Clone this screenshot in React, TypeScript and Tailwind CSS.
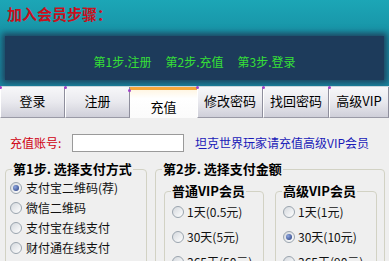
const Radio = ({ checked }: { checked?: boolean }) => (
  <span className="inline-flex h-[12px] w-[12px] shrink-0 items-center justify-center rounded-full border border-[#9aa4ae] bg-[linear-gradient(135deg,#d4d8dd,#ffffff)]">
    {checked && <span className="h-[6px] w-[6px] rounded-full bg-[radial-gradient(circle_at_35%_35%,#8ea6e0,#23397a)]" />}
  </span>
);

const tabs = [
  { label: "登录", w: "w-[65px]" },
  { label: "注册", w: "w-[65px]" },
  { label: "充值", w: "w-[67px]", active: true },
  { label: "修改密码", w: "w-[66px]" },
  { label: "找回密码", w: "w-[66px]" },
  { label: "高级VIP", w: "w-[60px]" },
];

const payWays = ["支付宝二维码(荐)", "微信二维码", "支付宝在线支付", "财付通在线支付"];
const normalVip = ["1天(0.5元)", "30天(5元)", "365天(50元)"];
const highVip = ["1天(1元)", "30天(10元)", "365天(90元)"];

export default function App() {
  return (
    <div className="h-[261px] w-[389px] overflow-hidden bg-[#efefef] font-['Noto_Sans_CJK_SC',sans-serif]">
      {/* header */}
      <div className="h-[86px] overflow-hidden bg-[linear-gradient(to_bottom,#1ca6b6,#1790a4_45%,#1a86a0)]">
        <div className="h-[36px] pl-[7px] pt-[4px] text-[15px] font-bold leading-[20px] text-[#c8101c]">加入会员步骤：</div>
        <div className="mx-[5px] flex h-[44px] items-center justify-center gap-[14px] bg-[#1d3b5b] pt-[8px] text-[12px] leading-[14px] text-[#36e036] shadow-[0_0_6px_3px_#1e4662]">
          <span>第1步.注册</span>
          <span>第2步.充值</span>
          <span>第3步.登录</span>
        </div>
      </div>
      <div className="h-[1px] bg-[#c9d6dc]" />

      {/* tabs */}
      <div className="flex h-[31px]">
        {tabs.map((t) => (
          <div
            key={t.label}
            className={
              t.active
                ? `${t.w} relative flex items-center justify-center border-t-[3px] border-[#f5a63a] bg-[linear-gradient(to_bottom,#fff6e4,#ffffff_30%,#fbfbfb)] pt-[5px] text-[13px] text-black`
                : `${t.w} relative flex items-center justify-center border-r border-l border-b border-r-[#8e8e9c] border-l-white border-b-[#9a9aa6] bg-[linear-gradient(to_bottom,#f7f7f9,#e9e9ee_50%,#cfcfd9)] pb-[2px] text-[13px] text-black`
            }
          >
            <span className="absolute -top-[1px] -left-[2px] h-[3px] w-[3px] rounded-full bg-[#a040c8]" />
            {t.label}
          </div>
        ))}
      </div>

      {/* account row */}
      <div className="mt-[16px] flex h-[18px] items-center pl-[10px] text-[12px]">
        <span className="w-[62px] text-[#d00010]">充值账号:</span>
        <input className="h-[18px] w-[112px] border border-[#9a9a9a] bg-white outline-none" />
        <span className="ml-[11px] text-[#1a1ab8]">坦克世界玩家请充值高级VIP会员</span>
      </div>

      {/* groups */}
      <div className="mt-[9px] flex gap-[8px] pl-[5px]">
        <fieldset className="h-[110px] w-[142px] rounded-[4px] border border-[#d2d2c4]">
          <legend className="ml-[6px] px-[1px] text-[13px] font-bold leading-[16px] text-black">第1步. 选择支付方式</legend>
          <div className="pt-[1px] pl-[4px]">
            {payWays.map((p, i) => (
              <div key={p} className="flex h-[20px] items-center gap-[4px] text-[12px] text-[#111]">
                <Radio checked={i === 0} />
                <span>{p}</span>
              </div>
            ))}
          </div>
        </fieldset>

        <fieldset className="h-[110px] w-[230px] rounded-[4px] border border-[#d2d2c4]">
          <legend className="ml-[6px] px-[1px] text-[13px] font-bold leading-[16px] text-black">第2步. 选择支付金额</legend>
          <div className="mt-[6px] flex gap-[11px] pl-[8px]">
            <fieldset className="h-[90px] w-[100px] rounded-[4px] border border-[#d2d2c4]">
              <legend className="ml-[6px] px-[1px] text-[13px] font-bold leading-[16px] text-black">普通VIP会员</legend>
              <div className="pl-[7px]">
                {normalVip.map((p) => (
                  <div key={p} className="flex h-[25px] items-center gap-[3px] text-[12px] text-[#111]">
                    <Radio />
                    <span>{p}</span>
                  </div>
                ))}
              </div>
            </fieldset>
            <fieldset className="h-[90px] w-[102px] rounded-[4px] border border-[#d2d2c4]">
              <legend className="ml-[6px] px-[1px] text-[13px] font-bold leading-[16px] text-black">高级VIP会员</legend>
              <div className="pl-[7px]">
                {highVip.map((p, i) => (
                  <div key={p} className="flex h-[25px] items-center gap-[3px] text-[12px] text-[#111]">
                    <Radio checked={i === 1} />
                    <span>{p}</span>
                  </div>
                ))}
              </div>
            </fieldset>
          </div>
        </fieldset>
      </div>
    </div>
  );
}
